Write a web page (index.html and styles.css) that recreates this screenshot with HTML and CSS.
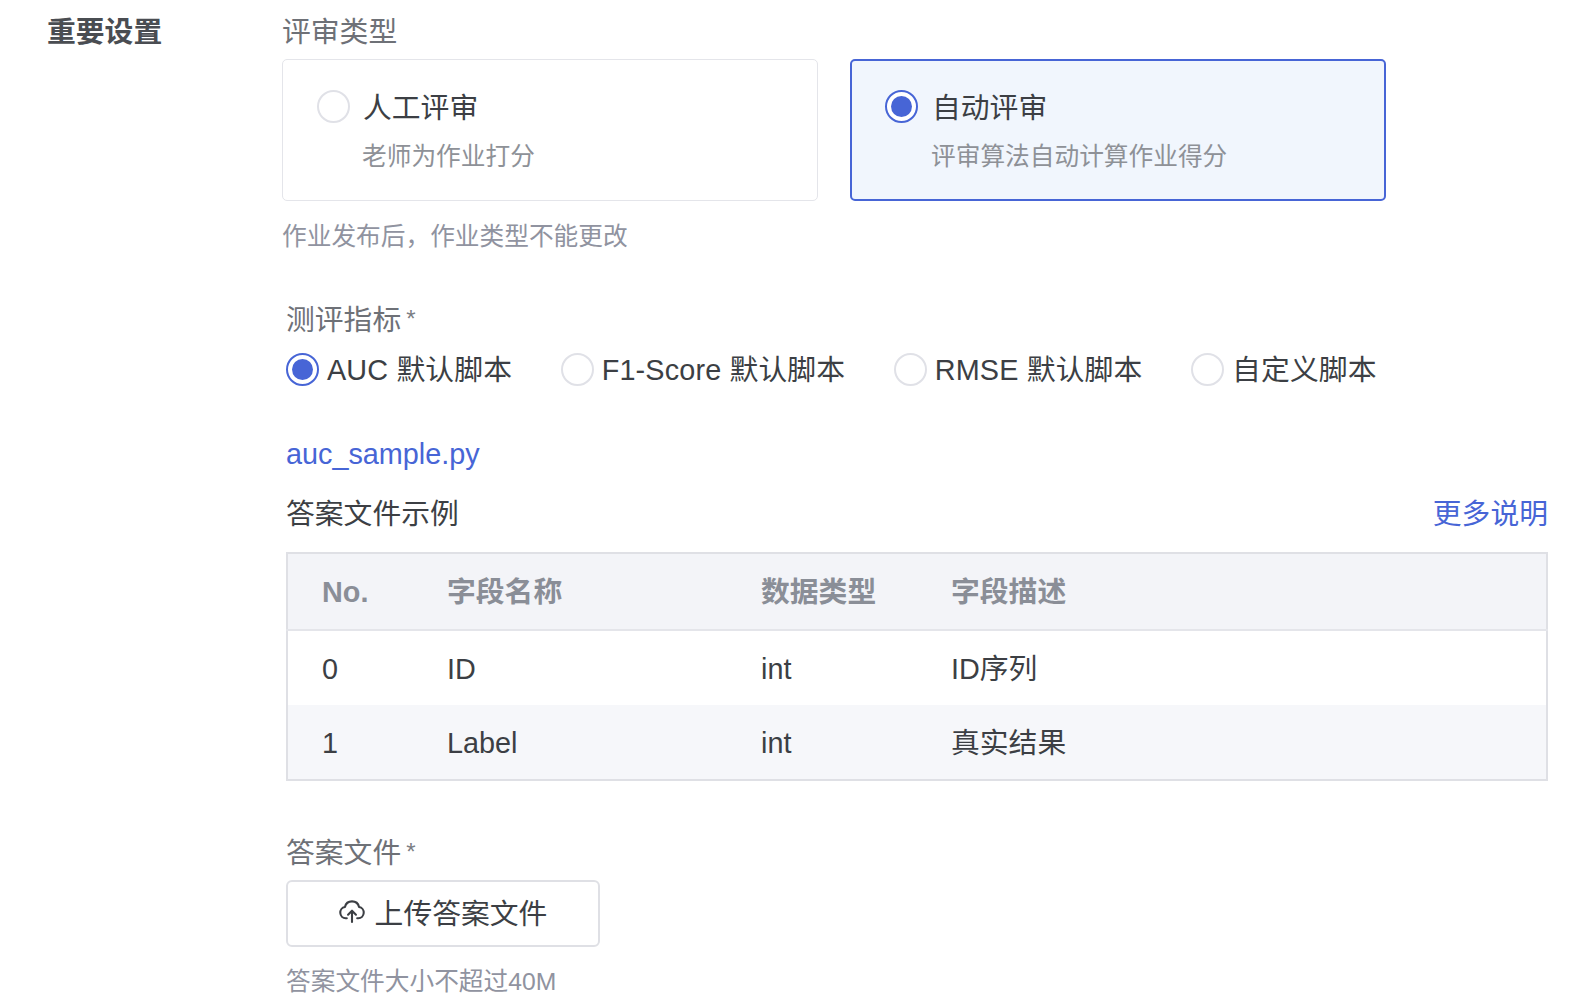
FILE: index.html
```html
<!DOCTYPE html>
<html lang="zh-CN">
<head>
<meta charset="utf-8">
<title>重要设置</title>
<link rel="stylesheet" href="styles.css">
</head>
<body>
<main class="page">
  <h2 class="section-title">重要设置</h2>
  <div class="form">
    <div class="label">评审类型</div>
    <div class="cards">
      <div class="card">
        <div class="card-head"><span class="radio"></span><span class="card-title">人工评审</span></div>
        <div class="card-sub">老师为作业打分</div>
      </div>
      <div class="card card-active">
        <div class="card-head"><span class="radio radio-on"></span><span class="card-title">自动评审</span></div>
        <div class="card-sub">评审算法自动计算作业得分</div>
      </div>
    </div>
    <p class="hint hint-type">作业发布后，作业类型不能更改</p>

    <div class="group">
      <div class="label label-metric">测评指标<span class="req">*</span></div>
      <div class="options">
        <div class="option"><span class="radio radio-on"></span><span class="option-text">AUC 默认脚本</span></div>
        <div class="option"><span class="radio"></span><span class="option-text">F1-Score 默认脚本</span></div>
        <div class="option"><span class="radio"></span><span class="option-text">RMSE 默认脚本</span></div>
        <div class="option"><span class="radio"></span><span class="option-text">自定义脚本</span></div>
      </div>
      <a class="link sample-link" href="#">auc_sample.py</a>
      <div class="sample-head"><span>答案文件示例</span><a class="link" href="#">更多说明</a></div>
      <table class="table">
        <thead>
          <tr><th class="col-no">No.</th><th class="col-name">字段名称</th><th class="col-type">数据类型</th><th>字段描述</th></tr>
        </thead>
        <tbody>
          <tr><td>0</td><td>ID</td><td>int</td><td>ID序列</td></tr>
          <tr class="stripe"><td>1</td><td>Label</td><td>int</td><td>真实结果</td></tr>
        </tbody>
      </table>
      <div class="label label-file">答案文件<span class="req">*</span></div>
      <button class="upload" type="button">
        <svg class="upload-icon" viewBox="0.5 2 25 23" fill="none" stroke="currentColor" stroke-width="2" stroke-linecap="round" stroke-linejoin="round" aria-hidden="true">
          <path d="M8 20.5H7A5.5 5.5 0 0 1 6.2 9.6 7 7 0 0 1 19.8 9.6 5.5 5.5 0 0 1 19 20.5H18"/>
          <path d="M13 24V13.5M9.2 17 13 13.2 16.8 17"/>
        </svg>
        <span>上传答案文件</span>
      </button>
      <p class="hint hint-file">答案文件大小不超过40M</p>
    </div>
  </div>
</main>
</body>
</html>
```
FILE: styles.css
```css
* { box-sizing: border-box; }
html, body { margin: 0; background: #fff; }
body {
  font-family: "Liberation Sans", "Noto Sans CJK SC", sans-serif;
  font-size: 28.8px;
  line-height: 40px;
  color: #3c3f44;
}
.page { display: flex; padding: 12px 0 0 47px; }
.section-title {
  width: 235px;
  flex: none;
  margin: 0;
  font-size: 28.8px;
  line-height: 40px;
  font-weight: 700;
  color: #4a4d52;
}
.form { width: 1266px; }
.label { color: #6e7177; }
.req { margin-left: 5px; font-size: 24px; vertical-align: 3px; color: #7b7e84; }
.cards { display: flex; gap: 32px; margin-top: 7px; }
.card {
  width: 536px;
  height: 142px;
  padding: 26px 34px 0;
  border: 1px solid #e4e5ea;
  border-radius: 5px;
}
.card-active {
  padding: 25px 33px 0;
  border: 2px solid #4765d6;
  background: #f1f6fd;
}
.card-head { display: flex; align-items: center; gap: 13px; height: 40px; }
.card-title { padding-top: 4px; }
.card-active .card-head { gap: 14px; }
.card-sub {
  margin: 13px 0 0 45px;
  font-size: 24.7px;
  line-height: 36px;
  color: #8e9197;
}
.card-active .card-sub { margin-left: 46px; }
.radio {
  width: 33px;
  height: 33px;
  flex: none;
  display: grid;
  place-items: center;
  border: 2px solid #e0e1e7;
  border-radius: 50%;
  background: #fff;
}
.radio-on { border-color: #4765d6; }
.radio-on::after {
  content: "";
  width: 21px;
  height: 21px;
  border-radius: 50%;
  background: #4765d6;
}
.hint { margin: 0; font-size: 24.7px; line-height: 36px; color: #9093a0; }
.hint-type { margin-top: 18px; }
.group { margin: 44px 0 0 4px; }
.options { display: flex; gap: 48.5px; margin-top: 9px; }
.option { display: flex; align-items: center; gap: 8px; height: 40px; }
.option-text { padding-top: 2px; letter-spacing: 0.15px; }
.link { color: #4765d6; text-decoration: none; }
.sample-link { display: block; margin-top: 45px; }
.sample-head { display: flex; justify-content: space-between; margin-top: 20px; }
.table {
  width: 100%;
  margin-top: 18px;
  border: 2px solid #dfe0e5;
  border-collapse: collapse;
  table-layout: fixed;
}
.table th, .table td { height: 75px; padding: 1px 0 0 34px; text-align: left; font-weight: 400; }
.table thead th {
  height: 77px;
  font-weight: 700;
  color: #8a8e97;
  background: #f3f4f8;
  border-bottom: 2px solid #e4e5ea;
}
.col-no { width: 126px; }
.col-name { width: 314px; }
.col-type { width: 190px; }
.stripe td { background: #f6f7fa; }
.label-file { margin-top: 51px; }
.upload {
  display: flex;
  align-items: center;
  justify-content: center;
  gap: 10px;
  width: 314px;
  height: 67px;
  margin-top: 7px;
  padding: 0;
  border: 2px solid #dfe0e5;
  border-radius: 6px;
  background: #fff;
  color: #3c3f44;
  font: inherit;
}
.upload-icon { width: 26px; height: 24px; flex: none; margin-top: -6px; }
.hint-file { margin-top: 17px; }
```
